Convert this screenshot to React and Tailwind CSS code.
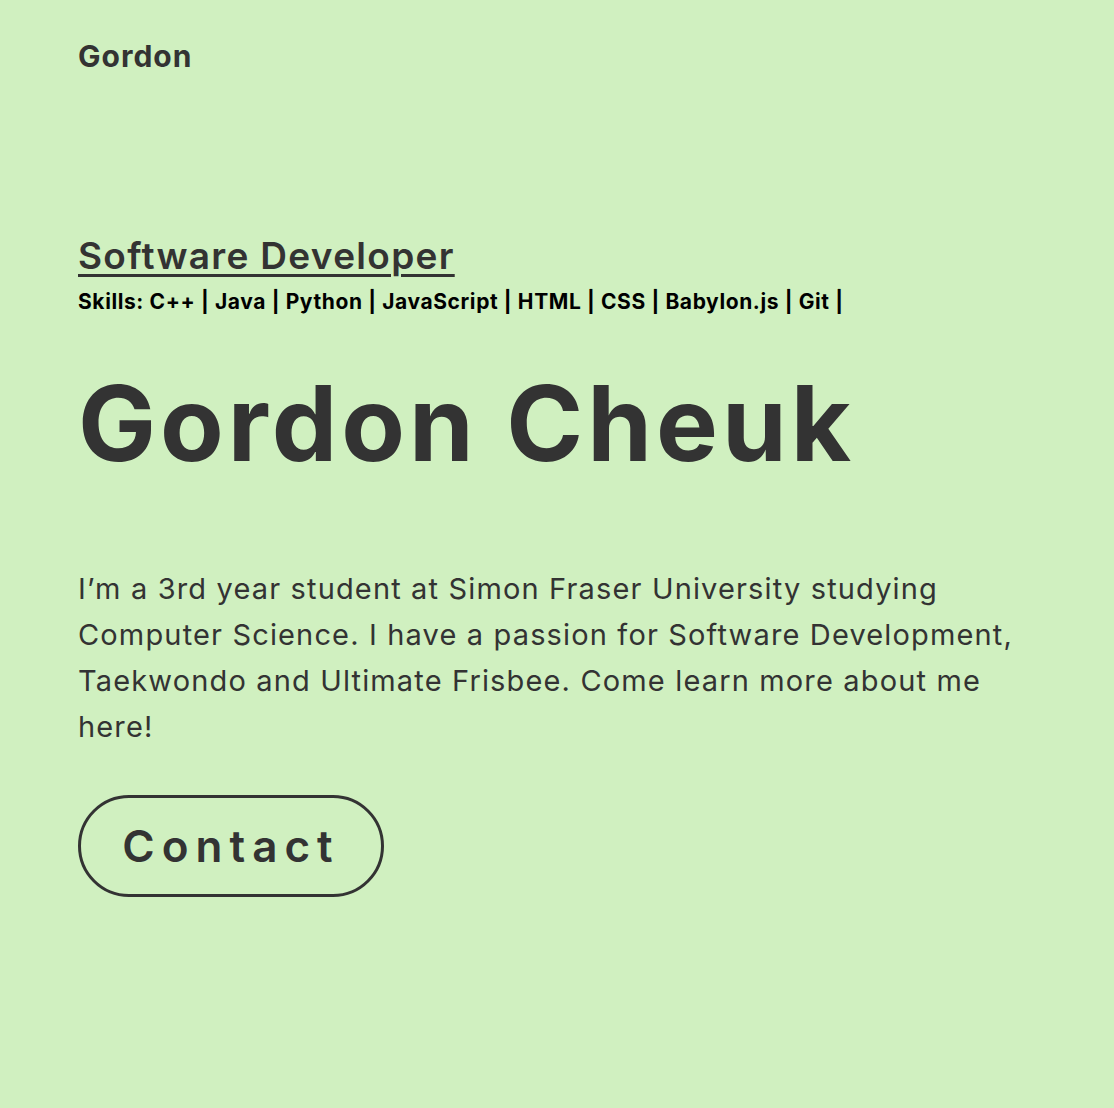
import React from 'react';

const skills = ['C++', 'Java', 'Python', 'JavaScript', 'HTML', 'CSS', 'Babylon.js', 'Git'];

export default function App() {
    return (
        <div className="min-h-[1108px] bg-[#d0f0c0] text-[#333333] font-['Inter','Open_Sans',sans-serif]">
            <header className="px-[78px] pt-[38px]">
                <h1 className="text-[30px] font-bold leading-[36px] tracking-[1px]">Gordon</h1>
            </header>

            <main className="px-[78px] pt-[160px]">
                <h2 className="text-[37px] font-semibold leading-[44px] tracking-[1.3px] underline decoration-[3px] underline-offset-[5px]">
                    Software Developer
                </h2>
                <p className="mt-[10px] text-[21px] font-bold leading-[28px] text-black tracking-[0.6px]">
                    Skills:{' '}
                    {skills.map((s) => (
                        <span key={s}>{s} | </span>
                    ))}
                </p>

                <h3 className="mt-[42px] text-[104px] font-bold leading-[130px] tracking-[4px]">
                    Gordon Cheuk
                </h3>

                <p className="mt-[78px] text-[29px] leading-[46px] tracking-[1.15px] max-w-[990px]">
                    I’m a 3rd year student at Simon Fraser University studying<br />
                    Computer Science. I have a passion for Software Development,<br />
                    Taekwondo and Ultimate Frisbee. Come learn more about me<br />
                    here!
                </p>

                <button className="mt-[45px] w-[306px] h-[102px] rounded-full border-[3px] border-[#333333] text-[44px] font-semibold tracking-[7px]">
                    Contact
                </button>
            </main>
        </div>
    );
}
